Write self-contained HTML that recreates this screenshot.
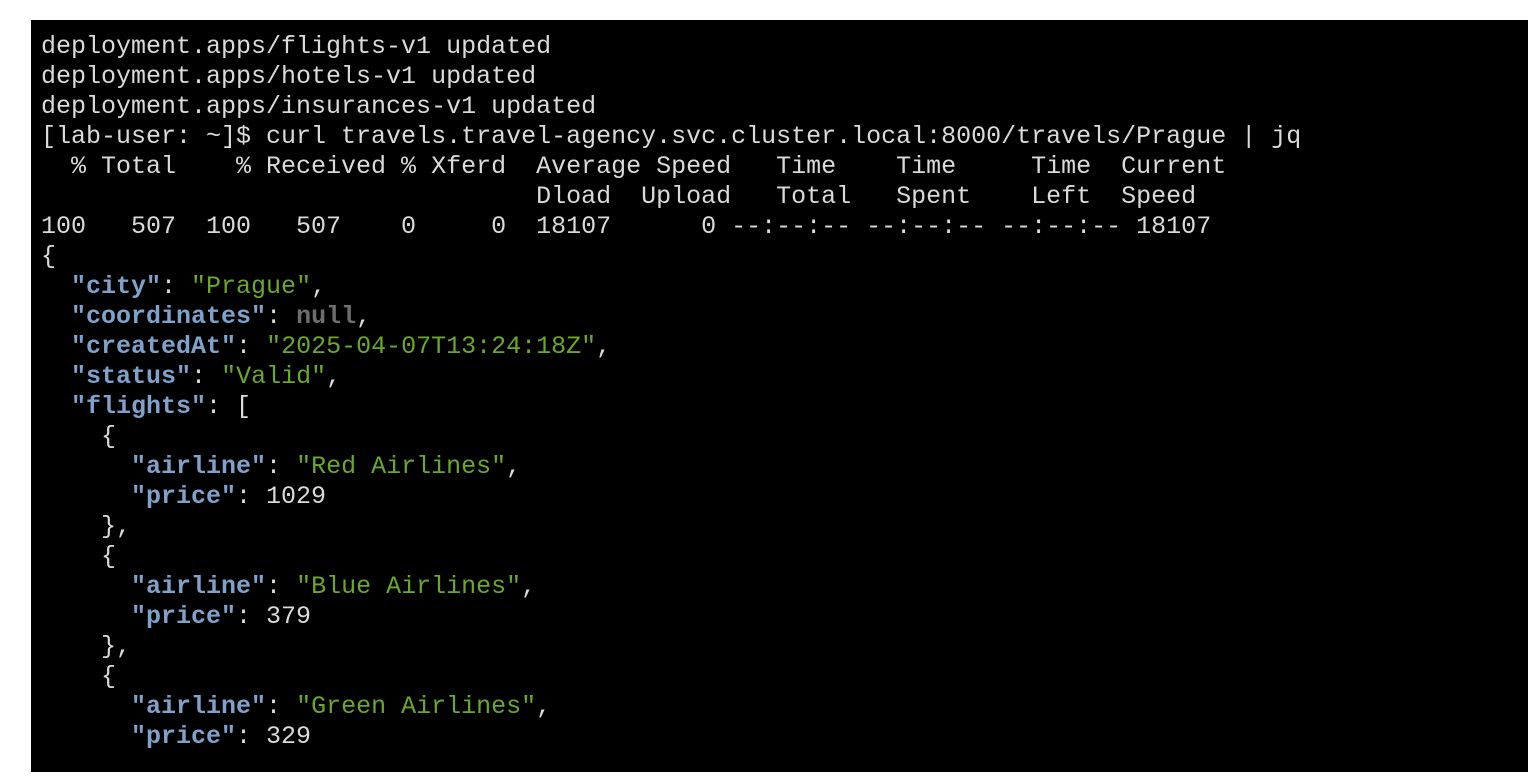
<!DOCTYPE html>
<html><head><style>
html,body{margin:0;padding:0;background:#fff;width:1528px;height:780px;overflow:hidden}
.t{position:absolute;left:31px;top:20px;width:1497px;height:752px;background:#000}
pre{position:absolute;left:41px;top:32px;margin:0;font-family:"Liberation Mono",monospace;font-size:25px;line-height:30px;color:#dadada;white-space:pre}
.k{color:#7fa2cb;font-weight:bold}
.s{color:#6aa82a}
.n{color:#6e6e6e;font-weight:bold}
</style></head><body>
<div class="t"></div>
<pre>deployment.apps/flights-v1 updated
deployment.apps/hotels-v1 updated
deployment.apps/insurances-v1 updated
[lab-user: ~]$ curl travels.travel-agency.svc.cluster.local:8000/travels/Prague | jq
  % Total    % Received % Xferd  Average Speed   Time    Time     Time  Current
                                 Dload  Upload   Total   Spent    Left  Speed
100   507  100   507    0     0  18107      0 --:--:-- --:--:-- --:--:-- 18107
{
  <span class="k">"city"</span>: <span class="s">"Prague"</span>,
  <span class="k">"coordinates"</span>: <span class="n">null</span>,
  <span class="k">"createdAt"</span>: <span class="s">"2025-04-07T13:24:18Z"</span>,
  <span class="k">"status"</span>: <span class="s">"Valid"</span>,
  <span class="k">"flights"</span>: [
    {
      <span class="k">"airline"</span>: <span class="s">"Red Airlines"</span>,
      <span class="k">"price"</span>: 1029
    },
    {
      <span class="k">"airline"</span>: <span class="s">"Blue Airlines"</span>,
      <span class="k">"price"</span>: 379
    },
    {
      <span class="k">"airline"</span>: <span class="s">"Green Airlines"</span>,
      <span class="k">"price"</span>: 329</pre>
</body></html>
